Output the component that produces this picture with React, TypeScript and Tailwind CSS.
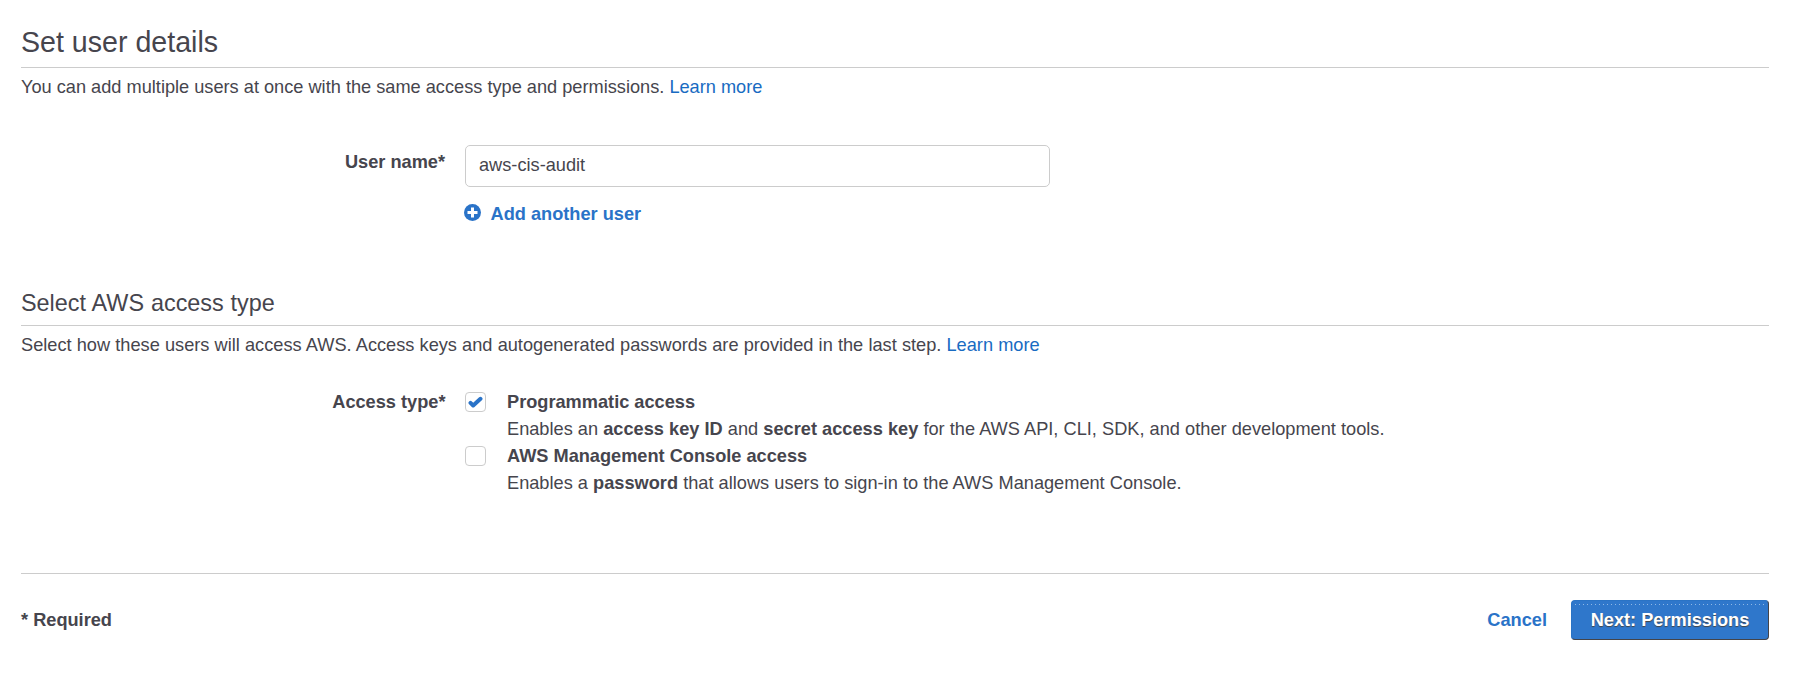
export default function App() {
  return (
    <main className="h-[684px] bg-white px-[21px] pt-[22px] pr-[49px] font-['Liberation_Sans',Arial,sans-serif] text-[18.2px] leading-[27px] text-[#46454d]">
      <section className="h-[265px]">
        <h1 className="h-[46px] border-b border-[#ccc] text-[28.6px] leading-[40px]">Set user details</h1>
        <p className="pt-[6px]">You can add multiple users at once with the same access type and permissions. <a className="text-[#186bc2]" href="#">Learn more</a></p>
        <div className="mt-[44px] flex">
          <label className="w-[424px] pt-[4px] text-right font-bold" htmlFor="user">User name*</label>
          <div className="ml-[20px]">
            <input id="user" defaultValue="aws-cis-audit" className="block h-[42px] w-[585px] rounded-[5px] border border-[#ccc] px-[13px] pb-[2px] outline-none" />
            <button className="mt-[14px] -ml-px flex items-center font-bold text-[#2a73c8]">
              <svg width="17" height="17" viewBox="0 0 17 17" className="mr-[9.5px] -mt-[4px]"><circle cx="8.5" cy="8.5" r="8.5" fill="currentColor" /><path d="M8.5 3.5v10M3.5 8.5h10" stroke="white" strokeWidth="3" /></svg>
              Add another user
            </button>
          </div>
        </div>
      </section>
      <section className="h-[287px] border-b border-[#ccc]">
        <h2 className="h-[39px] border-b border-[#ccc] text-[23.4px] leading-[32px] [word-spacing:0.4px]">Select AWS access type</h2>
        <p className="pt-[6px] [word-spacing:0.12px]">Select how these users will access AWS. Access keys and autogenerated passwords are provided in the last step. <a className="text-[#186bc2]" href="#">Learn more</a></p>
        <div className="mt-[30px] flex">
          <b className="w-[424.5px] text-right">Access type*</b>
          <div className="ml-[19.5px]">
            <div className="flex"><span className="mt-[3px] mr-[21px] flex h-[20px] w-[21px] items-center justify-center rounded-[4px] border border-[#ccc]"><svg width="15" height="13" viewBox="0 0 15 13"><path d="M2.5 6.8 5.2 9.5 12.5 2.8" fill="none" stroke="#2a73c8" strokeWidth="4" strokeLinecap="round" strokeLinejoin="round" /></svg></span><div><b>Programmatic access</b><p className="[word-spacing:0.08px]">Enables an <b>access key ID</b> and <b>secret access key</b> for the AWS API, CLI, SDK, and other development tools.</p></div></div>
            <div className="flex"><span className="mt-[3px] mr-[21px] h-[20px] w-[21px] rounded-[4px] border border-[#ccc]" /><div><b>AWS Management Console access</b><p className="[word-spacing:0.08px]">Enables a <b>password</b> that allows users to sign-in to the AWS Management Console.</p></div></div>
          </div>
        </div>
      </section>
      <footer className="flex items-center justify-between pt-[26px] font-bold">
        <span>* Required</span>
        <div className="flex items-center gap-[24px]"><a className="text-[#2a73c8]" href="#">Cancel</a><button className="relative h-[40px] w-[198px] rounded-[4px] border border-t-[#2a73c5] border-r-[#444449] border-b-[#444449] border-l-[#2a73c5] bg-[#2f77cb] text-white [text-shadow:0_1px_1px_#444]"><span className="absolute inset-x-[3px] top-[3px] h-px bg-[repeating-linear-gradient(90deg,#8fb8e5_0_1px,transparent_1px_4px)]" />Next: Permissions</button></div>
      </footer>
    </main>
  );
}
